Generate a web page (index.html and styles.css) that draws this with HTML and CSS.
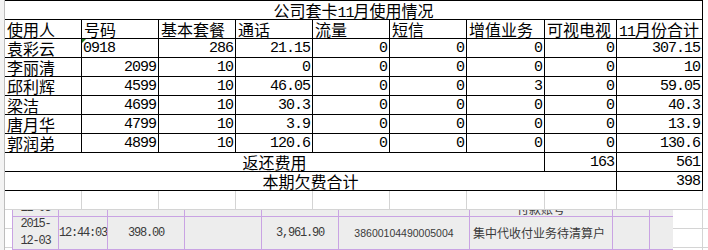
FILE: index.html
```html
<!DOCTYPE html>
<html lang="zh">
<head>
<meta charset="utf-8">
<link rel="stylesheet" href="styles.css">
</head>
<body>
<div class="sheet">
  <div class="rowhead"></div>
  <div class="area">
    <div class="report">
      <div class="c title span9">公司套卡<span class="n">11</span>月使用情况</div>

      <div class="c">使用人</div>
      <div class="c">号码</div>
      <div class="c">基本套餐</div>
      <div class="c">通话</div>
      <div class="c">流量</div>
      <div class="c">短信</div>
      <div class="c">增值业务</div>
      <div class="c">可视电视</div>
      <div class="c"><span class="n">11</span>月份合计</div>

      <div class="c">袁彩云</div>
      <div class="c n txt flag">0918</div>
      <div class="c n num">286</div>
      <div class="c n num">21.15</div>
      <div class="c n num">0</div>
      <div class="c n num">0</div>
      <div class="c n num">0</div>
      <div class="c n num">0</div>
      <div class="c n num">307.15</div>

      <div class="c">李丽清</div>
      <div class="c n num">2099</div>
      <div class="c n num">10</div>
      <div class="c n num">0</div>
      <div class="c n num">0</div>
      <div class="c n num">0</div>
      <div class="c n num">0</div>
      <div class="c n num">0</div>
      <div class="c n num">10</div>

      <div class="c">邱利辉</div>
      <div class="c n num">4599</div>
      <div class="c n num">10</div>
      <div class="c n num">46.05</div>
      <div class="c n num">0</div>
      <div class="c n num">0</div>
      <div class="c n num">3</div>
      <div class="c n num">0</div>
      <div class="c n num">59.05</div>

      <div class="c">梁洁</div>
      <div class="c n num">4699</div>
      <div class="c n num">10</div>
      <div class="c n num">30.3</div>
      <div class="c n num">0</div>
      <div class="c n num">0</div>
      <div class="c n num">0</div>
      <div class="c n num">0</div>
      <div class="c n num">40.3</div>

      <div class="c">唐月华</div>
      <div class="c n num">4799</div>
      <div class="c n num">10</div>
      <div class="c n num">3.9</div>
      <div class="c n num">0</div>
      <div class="c n num">0</div>
      <div class="c n num">0</div>
      <div class="c n num">0</div>
      <div class="c n num">13.9</div>

      <div class="c">郭润弟</div>
      <div class="c n num">4899</div>
      <div class="c n num">10</div>
      <div class="c n num">120.6</div>
      <div class="c n num">0</div>
      <div class="c n num">0</div>
      <div class="c n num">0</div>
      <div class="c n num">0</div>
      <div class="c n num">130.6</div>

      <div class="c center span7">返还费用</div>
      <div class="c n num">163</div>
      <div class="c n num">561</div>

      <div class="c center span8">本期欠费合计</div>
      <div class="c n num">398</div>
    </div>

    <div class="below">
      <div class="g"></div><div class="g"></div><div class="g"></div><div class="g"></div><div class="g"></div><div class="g"></div><div class="g"></div><div class="g"></div><div class="g"></div><div class="g"></div>
      <div class="g"></div><div class="g"></div><div class="g"></div><div class="g"></div><div class="g"></div><div class="g"></div><div class="g"></div><div class="g"></div><div class="g"></div><div class="g"></div>
      <div class="g"></div><div class="g"></div><div class="g"></div><div class="g"></div><div class="g"></div><div class="g"></div><div class="g"></div><div class="g"></div><div class="g"></div><div class="g"></div>
      <div class="g"></div><div class="g"></div><div class="g"></div><div class="g"></div><div class="g"></div><div class="g"></div><div class="g"></div><div class="g"></div><div class="g"></div><div class="g"></div>

      <div class="paste">
        <div class="p clip"><span class="pd">12-03</span></div>
        <div class="p clip"></div>
        <div class="p clip"></div>
        <div class="p clip"></div>
        <div class="p clip"></div>
        <div class="p clip"></div>
        <div class="p clip"><span class="pc">付款账号</span></div>
        <div class="p clip"></div>
        <div class="p clip"></div>

        <div class="p pdate"><span class="pd">2015-</span><span class="pd">12-03</span></div>
        <div class="p"><span class="pd">12:44:03</span></div>
        <div class="p"><span class="pd">398.00</span></div>
        <div class="p"></div>
        <div class="p"><span class="pd">3,961.90</span></div>
        <div class="p"><span class="pa">38600104490005004</span></div>
        <div class="p left"><span class="pc">集中代收付业务待清算户</span></div>
        <div class="p"></div>
        <div class="p"></div>

        <div class="p"></div><div class="p"></div><div class="p"></div><div class="p"></div><div class="p"></div><div class="p"></div><div class="p"></div><div class="p"></div><div class="p"></div>
      </div>
    </div>
  </div>
</div>
</body>
</html>
```

FILE: styles.css
```css
html, body {
  margin: 0;
  padding: 0;
  background: #ffffff;
  width: 708px;
  height: 250px;
  overflow: hidden;
}

.sheet {
  display: flex;
  align-items: flex-start;
  height: 250px;
  overflow: hidden;
}

.rowhead {
  width: 4px;
  height: 250px;
  flex: none;
  background: #f3f3f3;
  border-right: 1px solid #bdbdbd;
}

.area {
  flex: none;
  width: 703px;
}

.report {
  display: grid;
  grid-template-columns: 76px 76px 76px 76px 76px 76px 77px 71px 85px;
  grid-auto-rows: 18px;
  gap: 1px;
  padding: 1px 1px 1px 0;
  background: #000;
  width: fit-content;
  font-family: "Noto Sans CJK SC", sans-serif;
  font-size: 16px;
  color: #000;
}

.c {
  background: #fff;
  line-height: 18px;
  padding: 0 2px;
  white-space: nowrap;
  overflow: hidden;
  position: relative;
}

.n {
  font-family: "Liberation Mono", monospace;
  font-size: 15px;
  letter-spacing: -1px;
}

.c.n {
  line-height: 20px;
}

.num {
  text-align: right;
  padding-right: 2px;
}

.txt {
  padding-left: 1px;
}

.flag::before {
  content: "";
  position: absolute;
  left: 0;
  top: 0;
  border-top: 4px solid #1f7a1f;
  border-right: 4px solid transparent;
}

.title {
  text-align: center;
}

.center {
  text-align: center;
}

.span9 { grid-column: span 9; }
.span8 { grid-column: span 8; }
.span7 { grid-column: span 7; }

.below {
  position: relative;
  display: grid;
  grid-template-columns: 76px 76px 76px 76px 76px 76px 77px 71px 85px 5px;
  grid-auto-rows: 18px;
  gap: 1px;
  background: #d4d4d4;
  height: 59px;
  overflow: hidden;
}

.g {
  background: #fff;
}

.paste {
  position: absolute;
  left: 7px;
  top: 19px;
  display: grid;
  grid-template-columns: 45px 48px 76px 76px 76px 130px 142px 36px 23px;
  grid-template-rows: 6px 32px 12px;
  column-gap: 1px;
  row-gap: 1px;
  padding-left: 1px;
  background: #c9a3e3;
  color: #3a3a3a;
}

.p {
  background: #ededed;
  display: flex;
  flex-direction: column;
  align-items: center;
  justify-content: center;
  overflow: hidden;
  white-space: nowrap;
}

.p.left {
  align-items: flex-start;
  padding-left: 3px;
}

.p.clip {
  justify-content: flex-end;
}

.p.clip span {
  margin-bottom: -1px;
}

.pd {
  font-family: "Liberation Mono", monospace;
  font-size: 12px;
  letter-spacing: -1.2px;
  line-height: 17px;
}

.pa {
  font-family: "Liberation Sans", sans-serif;
  font-size: 10.5px;
  line-height: 14px;
}

.pc {
  font-family: "Noto Sans CJK SC", sans-serif;
  font-size: 12px;
  line-height: 16px;
}
```
